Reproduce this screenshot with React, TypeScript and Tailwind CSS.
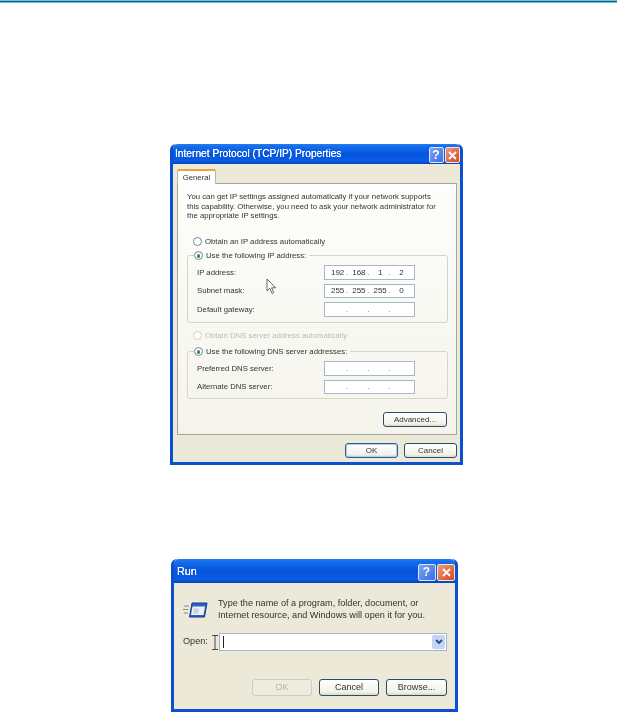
import React from 'react';

const font = 'font-["Liberation_Sans",Arial,sans-serif]';

function TitleBar({ title, className, textClass, btnClass }: { title: string; className: string; textClass: string; btnClass: string }) {
  return (
    <div className={`flex items-center justify-between rounded-t-[5px] bg-[linear-gradient(180deg,#2a7cec_0%,#1470f0_10%,#0654dc_50%,#0a5ce4_85%,#0542b8_100%)] ${className}`}>
      <span className={`text-white [text-shadow:0_0_0.6px_#fff] ${textClass}`}>{title}</span>
      <div className="flex gap-[1.5px] pt-[2px]">
        <div className={`flex items-center justify-center rounded-[2px] border border-[#dfe8fa] bg-[linear-gradient(135deg,#7ea4f4,#3b6ce0)] text-[12px] font-bold leading-none text-white ${btnClass}`}>?</div>
        <div className={`flex items-center justify-center rounded-[2px] border border-[#f4e4dc] bg-[linear-gradient(135deg,#f09a78,#d8481e)] ${btnClass}`}>
          <svg width="9" height="9" viewBox="0 0 9 9">
            <path d="M1 1l7 7M8 1L1 8" stroke="#fff" strokeWidth="1.8" />
          </svg>
        </div>
      </div>
    </div>
  );
}

function Radio({ checked, disabled }: { checked?: boolean; disabled?: boolean }) {
  return (
    <div className={`flex h-[9px] w-[9px] shrink-0 items-center justify-center rounded-full border bg-white ${disabled ? 'border-[#d4d3c8]' : 'border-[#6a88a8]'}`}>
      {checked && <div className="h-[3.5px] w-[3.5px] rounded-full bg-[#3d8a4a]" />}
    </div>
  );
}

function Button({ label, className, primary, disabled }: { label: string; className: string; primary?: boolean; disabled?: boolean }) {
  const border = disabled
    ? 'border-[#cfcdc0] bg-[#eeecdf] text-[#b5b4a8]'
    : primary
      ? 'border-[#2a5f9c] bg-[linear-gradient(180deg,#ffffff,#f3f2ea_80%,#dcd8c8)] ring-1 ring-inset ring-[#b4cbec] text-[#333]'
      : 'border-[#2c4c6c] bg-[linear-gradient(180deg,#ffffff,#f3f2ea_80%,#dcd8c8)] text-[#333]';
  return <div className={`flex items-center justify-center rounded-[3px] border ${className} ${border}`}>{label}</div>;
}

function IpRow({ label, value }: { label: string; value: string[] }) {
  return (
    <div className="flex h-[14px] items-center justify-between">
      <span>{label}</span>
      <div className="grid h-[14.5px] w-[91px] grid-cols-4 items-center border border-[#a4b8ca] bg-white px-[2px] text-center text-[8px] leading-[10px]">
        {value.map((part, i) => (
          <span key={i} className="relative h-[10px]">
            {part}
            {i < 3 && <span className="absolute right-0 top-0 text-[#666]">.</span>}
          </span>
        ))}
      </div>
    </div>
  );
}

const empty = ['', '', '', ''];

function Group({ legend, bottom, children }: { legend: string; bottom: string; children: React.ReactNode }) {
  return (
    <fieldset className={`rounded-[3px] border border-[#d6d6c8] pl-[9px] ${bottom}`}>
      <legend className="ml-[-3px] flex items-center gap-[3px] pr-[3px]">
        <Radio checked />
        <span>{legend}</span>
      </legend>
      <div className="flex flex-col gap-[4.5px] pr-[32px] pt-[5px]">{children}</div>
    </fieldset>
  );
}

function TcpDialog() {
  return (
    <div className="relative ml-[170px] w-[293px] rounded-t-[6px] border-x-[3px] border-b-[3px] border-[#0a50d0] bg-[#ece9d8] blur-[0.3px]">
      <TitleBar title="Internet Protocol (TCP/IP) Properties" className="h-5 pl-[2px]" textClass="text-[10.2px]" btnClass="h-[16px] w-[15px]" />
      <div className="pl-[4px] pr-[3px] pt-[5px]">
        <div className="relative z-10 mb-[-1px] flex h-[15px] w-[39px] items-center justify-center rounded-t-[2px] border-x border-[#b9b8a8] border-t-2 border-t-[#f0a030] bg-white text-[7.75px] text-[#333]">
          General
        </div>
        <div className="h-[252px] border border-[#a5a597] bg-[linear-gradient(180deg,#fdfdfb,#f5f4ec)] pl-[9px] pr-[8px] pt-[8px] text-[7.75px] leading-[9.5px] text-[#333]">
          <p className="whitespace-nowrap">You can get IP settings assigned automatically if your network supports</p>
          <p className="whitespace-nowrap">this capability. Otherwise, you need to ask your network administrator for</p>
          <p className="whitespace-nowrap">the appropriate IP settings.</p>

          <div className="ml-[6px] mt-[16px] flex items-center gap-[3px]">
            <Radio />
            <span>Obtain an IP address automatically</span>
          </div>
          <div className="mt-[5px]">
            <Group legend="Use the following IP address:" bottom="pb-[5px]">
              <IpRow label="IP address:" value={['192', '168', '1', '2']} />
              <IpRow label="Subnet mask:" value={['255', '255', '255', '0']} />
              <IpRow label="Default gateway:" value={empty} />
            </Group>
          </div>
          <div className="ml-[6px] mt-[8px] flex items-center gap-[3px] text-[#bdbcb0]">
            <Radio disabled />
            <span>Obtain DNS server address automatically</span>
          </div>
          <div className="mt-[7px]">
            <Group legend="Use the following DNS server addresses:" bottom="pb-[4px]">
              <IpRow label="Preferred DNS server:" value={empty} />
              <IpRow label="Alternate DNS server:" value={empty} />
            </Group>
          </div>
          <div className="mr-[1px] mt-[13px] flex justify-end">
            <Button label="Advanced..." className="h-[15px] w-[64px] text-[8px]" />
          </div>
        </div>
        <div className="flex justify-end gap-[6px] pb-[4px] pt-[8px]">
          <Button label="OK" className="h-[15px] w-[53px] text-[8px]" primary />
          <Button label="Cancel" className="h-[15px] w-[53px] text-[8px]" />
        </div>
      </div>
      {/* mouse pointer from the original capture */}
      <svg className="absolute left-[93px] top-[134px]" width="11" height="17" viewBox="0 0 11 17">
        <path d="M1 1v12l2.8-2.8L6 15.5l1.8-.9-2.2-4.8h4z" fill="#fff" stroke="#556" strokeWidth="0.9" />
      </svg>
    </div>
  );
}

function RunDialog() {
  return (
    <div className="relative ml-[171px] w-[287px] rounded-t-[6px] border-x-[3px] border-b-[3px] border-[#0a50d0] bg-[#ece9d8] blur-[0.3px]">
      <TitleBar title="Run" className="h-6 pl-[3px]" textClass="text-[10.8px]" btnClass="h-[17px] w-[18px]" />
      <div className="h-[126px] pl-[9px] pr-[8px] pt-[15px] text-[#333]">
        <div className="flex items-center gap-[10px]">
          <svg width="25" height="16" viewBox="0 0 25 16" className="shrink-0">
            <path d="M1 4h5M0 7.5h5M1 11h4" stroke="#8a8a80" strokeWidth="1" />
            <path d="M9 1h15l-2.5 14H6.5z" fill="#2a62c8" stroke="#1a3c80" strokeWidth="1" />
            <path d="M9.5 4.5h12.5l-1.5 8.5H8z" fill="#eef2f8" />
            <path d="M11 6.5h5l-1 5h-5z" fill="#c8d0dc" />
          </svg>
          <p className="whitespace-nowrap text-[9.15px] leading-[11.5px]">
            Type the name of a program, folder, document, or
            <br />
            Internet resource, and Windows will open it for you.
          </p>
        </div>
        <div className="mt-[12px] flex items-center text-[9.15px]">
          <span className="w-[36px]">Open:</span>
          <div className="flex h-[18px] flex-1 items-center justify-between border border-[#a4b8ca] bg-white pl-[3px] pr-[1px]">
            <div className="h-[12px] w-px bg-[#222]" />
            <div className="flex h-[14px] w-[13px] items-center justify-center rounded-[2px] bg-[#c4d4f4]">
              <svg width="8" height="6" viewBox="0 0 8 6">
                <path d="M1 1l3 3 3-3" fill="none" stroke="#2b4a88" strokeWidth="1.8" />
              </svg>
            </div>
          </div>
        </div>
        <div className="mt-[28px] flex justify-end gap-[7px]">
          <Button label="OK" className="h-[17px] w-[60px] text-[9px]" disabled />
          <Button label="Cancel" className="h-[17px] w-[60px] text-[9px]" />
          <Button label="Browse..." className="h-[17px] w-[61px] text-[9px]" />
        </div>
      </div>
      {/* text cursor beside the Open label */}
      <svg className="absolute left-[38px] top-[76px]" width="6" height="15" viewBox="0 0 6 15">
        <path d="M0 .5h6M0 14.5h6M3 .5v14" fill="none" stroke="#444" strokeWidth="1" />
      </svg>
    </div>
  );
}

export default function App() {
  return (
    <div className={`h-[714px] w-[617px] overflow-hidden bg-white ${font}`}>
      <div className="h-[3px] border-y border-[#6fc0dc] bg-[#1c5c78]" />
      <div className="pt-[141px]">
        <TcpDialog />
      </div>
      <div className="pt-[94px]">
        <RunDialog />
      </div>
    </div>
  );
}
